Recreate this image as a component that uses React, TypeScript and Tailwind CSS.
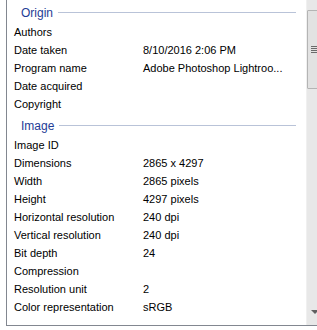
import React from "react";

const origin: [string, string][] = [
  ["Authors", ""],
  ["Date taken", "8/10/2016 2:06 PM"],
  ["Program name", "Adobe Photoshop Lightroo..."],
  ["Date acquired", ""],
  ["Copyright", ""],
];

const image: [string, string][] = [
  ["Image ID", ""],
  ["Dimensions", "2865 x 4297"],
  ["Width", "2865 pixels"],
  ["Height", "4297 pixels"],
  ["Horizontal resolution", "240 dpi"],
  ["Vertical resolution", "240 dpi"],
  ["Bit depth", "24"],
  ["Compression", ""],
  ["Resolution unit", "2"],
  ["Color representation", "sRGB"],
];

function Header({ title }: { title: string }) {
  return (
    <div className="flex items-center h-[23px] pt-[2px] pl-[14px] pr-[10px]">
      <span className="text-[#1e3c96] text-[12px] leading-none">{title}</span>
      <div className="flex-1 h-px bg-[#b9c3d8] ml-[5px]" />
    </div>
  );
}

function Row({ k, v }: { k: string; v: string }) {
  return (
    <div className="flex items-center h-[18px] pl-[7px] text-[11px] text-black leading-none">
      <span className="w-[129px] shrink-0">{k}</span>
      <span>{v}</span>
    </div>
  );
}

export default function App() {
  return (
    <div className="w-[317px] h-[330px] bg-white overflow-hidden" style={{ fontFamily: '"Liberation Sans", Arial, sans-serif' }}>
      <div className="ml-[6px] w-[328px] h-[326px] border-l border-b border-[#828790] flex">
        <div className="w-[299px] shrink-0 flex flex-col">
          <Header title="Origin" />
          {origin.map(([k, v]) => (
            <Row key={k} k={k} v={v} />
          ))}
          <Header title="Image" />
          {image.map(([k, v]) => (
            <Row key={k} k={k} v={v} />
          ))}
        </div>
        <div className="w-[17px] shrink-0 bg-[#e8e8e8] border-l border-[#f0f0f0] flex flex-col">
          <div className="mt-[10px] w-[15px] h-[79px] bg-[#e2e2e2] border border-[#b4b4b4] rounded-[1px] flex flex-col items-center justify-center gap-[1px]">
            <div className="w-[7px] h-px bg-[#6a6a6a]" />
            <div className="w-[7px] h-px bg-[#6a6a6a]" />
            <div className="w-[7px] h-px bg-[#6a6a6a]" />
            <div className="w-[7px] h-px bg-[#6a6a6a]" />
          </div>
          <div className="flex-1" />
          <div className="mb-[11px] ml-[4px] w-0 h-0 border-l-[4px] border-r-[4px] border-t-[4px] border-l-transparent border-r-transparent border-t-[#606060]" />
        </div>
      </div>
    </div>
  );
}
